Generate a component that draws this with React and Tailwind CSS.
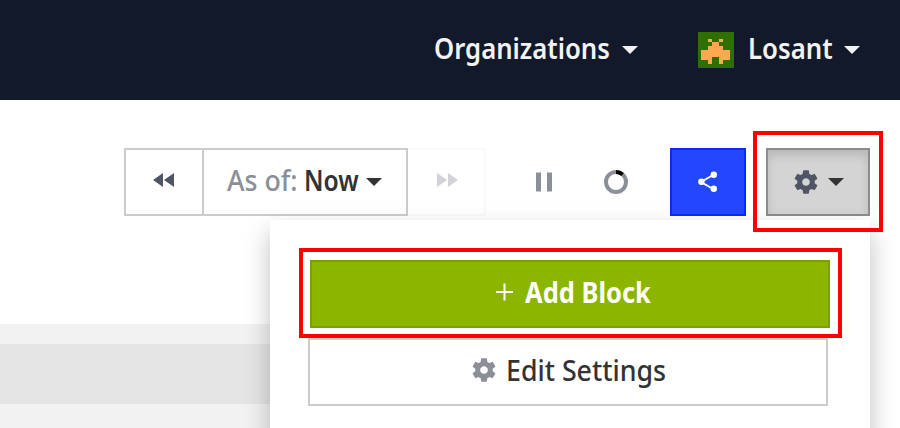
import React from "react";

function Caret({ className }) {
  return (
    <svg className={className} width="16" height="8" viewBox="0 0 16 8" fill="currentColor">
      <path d="M0 0H16L8 8Z" />
    </svg>
  );
}

function Gear({ className }) {
  return (
    <svg className={className} width="28" height="28" viewBox="0 0 24 24" fill="currentColor">
      <path d="M19.43 12.98c.04-.32.07-.64.07-.98s-.03-.66-.07-.98l2.11-1.65c.19-.15.24-.42.12-.64l-2-3.46c-.12-.22-.39-.3-.61-.22l-2.49 1c-.52-.4-1.08-.73-1.69-.98l-.38-2.65C14.46 2.18 14.25 2 14 2h-4c-.25 0-.46.18-.49.42l-.38 2.65c-.61.25-1.17.59-1.69.98l-2.49-1c-.23-.09-.49 0-.61.22l-2 3.46c-.13.22-.07.49.12.64l2.11 1.65c-.04.32-.07.65-.07.98s.03.66.07.98l-2.11 1.65c-.19.15-.24.42-.12.64l2 3.46c.12.22.39.3.61.22l2.49-1c.52.4 1.08.73 1.69.98l.38 2.65c.03.24.24.42.49.42h4c.25 0 .46-.18.49-.42l.38-2.65c.61-.25 1.17-.59 1.69-.98l2.49 1c.23.09.49 0 .61-.22l2-3.46c.12-.22.07-.49-.12-.64l-2.11-1.65zM12 15.3c-1.8 0-3.3-1.5-3.3-3.3s1.5-3.3 3.3-3.3 3.3 1.5 3.3 3.3-1.5 3.3-3.3 3.3z" />
    </svg>
  );
}

function Avatar() {
  return (
    <svg className="ml-[60px]" width="36" height="36" viewBox="0 0 36 36" shapeRendering="crispEdges">
      <path fill="#2f6f00" d="M0 0H36V36H0Z" />
      <path fill="#ffa850" d="M10 7h4v3h7v-3h4v3h-4v4h4v4h7v10h-7v4h-4v-7h-7v7h-4v-4h-7v-10h7v-4h4v-4h-4z" />
    </svg>
  );
}

export default function App() {
  return (
    <div className="relative h-[428px] w-[900px] overflow-hidden bg-white font-['Noto_Sans',sans-serif] text-[28px] leading-[36px] text-[#333]">
      <header className="flex h-[100px] items-start bg-[#11192b] pl-[434px] pt-8 font-semibold text-[#f2f2f2]">
        <div className="flex h-9 w-[204px] items-center justify-between">
          <span className="mb-1 w-[176px] origin-left scale-x-[0.917] whitespace-nowrap">Organizations</span>
          <Caret />
        </div>
        <Avatar />
        <div className="ml-[14px] flex h-9 w-[112px] items-center justify-between">
          <span className="mb-1 w-[86px] origin-left scale-x-[0.92] whitespace-nowrap">Losant</span>
          <Caret />
        </div>
      </header>

      <div className="flex h-[224px] items-start pl-[124px] pt-12">
        <div className="flex h-[68px] w-20 items-center justify-center border-2 border-[#ccc] text-[#4f5565]">
          <svg className="mb-1" width="22" height="14" viewBox="0 0 22 14" fill="currentColor"><path d="M0 7L10 0V14ZM11 7L21 0V14Z" /></svg>
        </div>
        <div className="-ml-0.5 flex h-[68px] w-[206px] items-center border-2 border-[#ccc] pl-[23px]">
          <span className="mb-1 w-[77px] origin-left scale-x-[0.955] whitespace-nowrap font-medium text-[#8a8f98]">As of:</span>
          <span className="mb-1 w-[55px] origin-left scale-x-[0.88] font-semibold">Now</span>
          <Caret className="ml-[7px]" />
        </div>
        <div className="flex h-[68px] w-[78px] items-center border-2 border-l-0 border-[#fafafa] pl-[29px] text-[#d1d3d8]">
          <svg className="mb-1" width="22" height="14" viewBox="0 0 22 14" fill="currentColor"><path d="M0 0L10 7L0 14ZM11 0L21 7L11 14Z" /></svg>
        </div>
        <svg className="ml-[50px] mt-[24px]" width="16" height="20" viewBox="0 0 16 20" fill="#8a8f98"><path d="M0 .5H5V19.5H0ZM11 .5H16V19.5H11Z" /></svg>
        <svg className="ml-[52px] mt-[22px]" width="24" height="24" viewBox="0 0 24 24" fill="none" strokeWidth="4">
          <circle cx="12" cy="12" r="10" stroke="#8a8f98" />
          <path d="M12 2A10 10 0 0 1 18.6 4.5" stroke="#000" />
        </svg>
        <div className="ml-[42px] flex h-[68px] w-[76px] items-center justify-center border-2 border-[#0a2bff] bg-[#2347ff]">
          <svg width="20" height="22" viewBox="0 0 20 22" fill="white"><path d="M16 3.5L3 11L16 18.5" fill="none" stroke="white" strokeWidth="2" /><circle cx="15.8" cy="3.7" r="3.2" /><circle cx="3.4" cy="10.7" r="3.2" /><circle cx="15.8" cy="17.8" r="3.2" /></svg>
        </div>
        <div className="ml-5 flex h-[68px] w-[104px] items-center border-2 border-[#8c8c8c] bg-[#d4d4d4] pl-6 shadow-[inset_0_6px_10px_rgba(0,0,0,0.125)]">
          <Gear className="text-[#4f5565]" />
          <Caret className="ml-2" />
        </div>
      </div>

      <div className="flex h-[104px] w-[400px] flex-col bg-[#f2f2f2]">
        <div className="mt-5 h-[60px] bg-[#e5e5e5]" />
      </div>

      <div className="absolute left-[270px] top-[220px] flex h-[240px] w-[600px] flex-col bg-white pl-[38px] pt-10 shadow-[0_12px_24px_rgba(0,0,0,0.25)]">
        <div className="ml-0.5 flex h-[68px] w-[520px] items-center border-2 border-[#7ba003] bg-[#8cb500] pl-[184px] text-white">
          <svg width="17" height="18" viewBox="0 0 17 18" stroke="white" strokeWidth="2" className="mb-1"><path d="M0 9H17M8.5 .5V17.5" /></svg>
          <span className="mb-1 ml-3 w-[127px] origin-left scale-x-[0.91] whitespace-nowrap font-bold">Add Block</span>
        </div>
        <div className="mt-[10px] flex h-[68px] w-[520px] items-center border-2 border-[#ccc] pl-[160px]">
          <Gear className="mb-1 text-[#8a8f98]" />
          <span className="mb-1 ml-2 w-[160px] origin-left scale-x-[0.955] whitespace-nowrap font-medium">Edit Settings</span>
        </div>
      </div>

      <div className="absolute left-[753px] top-[131px] h-[101px] w-[130px] border-4 border-[#f00]" />
      <div className="absolute left-[299px] top-[248px] h-[90px] w-[543px] border-4 border-[#f00]" />
    </div>
  );
}
